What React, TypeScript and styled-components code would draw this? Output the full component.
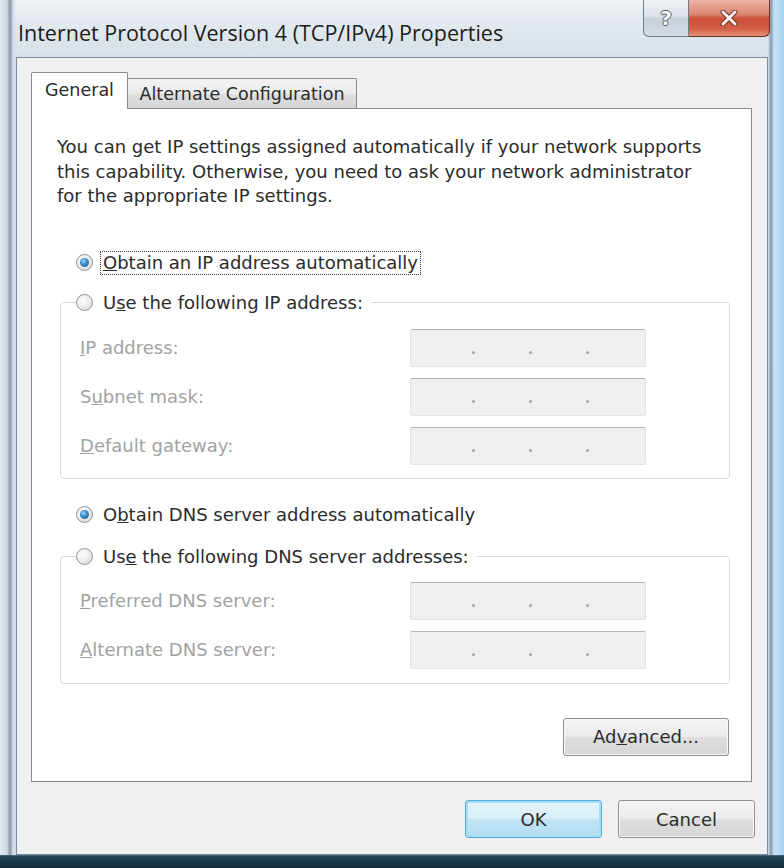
import React from 'react';
import styled, { createGlobalStyle, css } from 'styled-components';

const GlobalStyle = createGlobalStyle`
  html, body {
    margin: 0;
    padding: 0;
  }
  body {
    width: 784px;
    height: 868px;
    overflow: hidden;
    font-family: "DejaVu Sans", "Liberation Sans", sans-serif;
  }
`;

const Window = styled.div`
  width: 784px;
  height: 868px;
  box-sizing: border-box;
  display: flex;
  flex-direction: column;
  padding: 0 16px 13px;
  background:
    linear-gradient(to top, #132c3a 0, #234659 12px, #5f7f93 13px, transparent 13px),
    linear-gradient(to right, #e2e8ee 0, #cdd8e2 7px, #8096a9 10px, #d0dbe5 13px, transparent 16px),
    linear-gradient(to left, #a8d2ee 0, #c6e2f5 10px, #8197aa 13px, transparent 16px),
    linear-gradient(to bottom, #eef2f5 0, #e1e8ee 28px, #d7e0e8 57px, #d3dde6 100%);
`;

const TitleBar = styled.div`
  height: 57px;
  flex: none;
  display: flex;
  align-items: flex-start;
  justify-content: space-between;
  margin-right: -2px;
`;

const Title = styled.div`
  margin: 19px 0 0 2px;
  font-family: "Open Sans", "Noto Sans", sans-serif;
  font-size: 21.5px;
  line-height: 28px;
  color: #1c1c1c;
  white-space: nowrap;
`;

const CaptionGroup = styled.div`
  display: flex;
`;

const CaptionButton = styled.div<{ $close?: boolean }>`
  height: 37px;
  box-sizing: border-box;
  display: flex;
  align-items: center;
  justify-content: center;
  border: 1px solid #6e7b88;
  border-top: none;
  ${(p) =>
    p.$close
      ? css`
          width: 81px;
          border-color: #6a2f28;
          border-left: none;
          border-radius: 0 0 6px 0;
          background: linear-gradient(to bottom, #ecb5a8 0%, #dc8470 40%, #cc5038 52%, #d25f46 80%, #e3917a 100%);
        `
      : css`
          width: 46px;
          border-radius: 0 0 0 6px;
          background: linear-gradient(to bottom, #eef2f5 0%, #dce3e9 45%, #c7d1da 52%, #d4dde5 100%);
        `}
`;

const HelpGlyph = styled.span`
  font-family: "DejaVu Sans", sans-serif;
  font-weight: bold;
  font-size: 20px;
  color: #f7f7f7;
  text-shadow: 1px 0 0 #55626e, -1px 0 0 #55626e, 0 1px 0 #55626e, 0 -1px 0 #55626e;
`;

const Client = styled.div`
  flex: 1;
  display: flex;
  flex-direction: column;
  background: #f0f0f0;
  border: 1px solid #7d8e9e;
  padding: 14px 12px 0 14px;
`;

const TabRow = styled.div`
  height: 36px;
  display: flex;
  align-items: flex-end;
`;

const Tab = styled.div<{ $active?: boolean }>`
  box-sizing: border-box;
  display: flex;
  align-items: center;
  justify-content: center;
  font-size: 17.5px;
  color: #2b2b2b;
  white-space: nowrap;
  border: 1px solid #898c95;
  border-bottom: none;
  ${(p) =>
    p.$active
      ? css`
          height: 37px;
          width: 97px;
          margin-bottom: -1px;
          position: relative;
          z-index: 1;
          background: #fff;
          border-radius: 2px 2px 0 0;
          padding-bottom: 2px;
        `
      : css`
          height: 30px;
          width: 229px;
          border-left: none;
          border-radius: 0 2px 0 0;
          background: linear-gradient(to bottom, #f3f3f3 0%, #ebebeb 50%, #dedede 51%, #d6d6d6 100%);
        `}
`;

const Panel = styled.div`
  width: 721px;
  height: 674px;
  box-sizing: border-box;
  display: flex;
  flex-direction: column;
  background: #fff;
  border: 1px solid #898c95;
  padding: 26px 21px 0 25px;
  font-size: 18px;
  color: #2b2b2b;
`;

const Intro = styled.p`
  margin: 0;
  line-height: 24.5px;
  white-space: nowrap;
`;

const RadioRow = styled.label<{ $gap?: number; $inset?: number }>`
  display: flex;
  align-items: center;
  height: 28px;
  padding-left: ${(p) => p.$inset ?? 19}px;
  gap: 8px;
  margin-top: ${(p) => p.$gap ?? 0}px;
  white-space: nowrap;
`;

const RadioCircle = styled.span<{ $checked?: boolean }>`
  width: 17px;
  height: 17px;
  box-sizing: border-box;
  border-radius: 50%;
  border: 1px solid #8f9396;
  background: radial-gradient(circle at 40% 35%, #ffffff 0%, #eeeeee 45%, #d4d4d4 100%);
  display: flex;
  align-items: center;
  justify-content: center;
  flex: none;
  ${(p) =>
    p.$checked &&
    css`
      &::after {
        content: '';
        width: 9px;
        height: 9px;
        border-radius: 50%;
        background: radial-gradient(circle at 40% 35%, #9fd6f6 0%, #3c8fcc 40%, #1d5588 100%);
      }
    `}
`;

const RadioText = styled.span<{ $focused?: boolean }>`
  line-height: 22px;
  padding: 0 2px;
  ${(p) =>
    p.$focused &&
    css`
      outline: 1px dotted #3a3a3a;
    `}
`;

const GroupBox = styled.fieldset<{ $gap: number }>`
  margin: ${(p) => p.$gap}px 0 0 3px;
  padding: 0;
  border: 1px solid #d5dde3;
  border-radius: 4px;
  min-width: 0;
`;

const GroupLegend = styled.legend`
  margin-left: 15px;
  padding: 0 6px 0 0;
  display: flex;
`;

const GroupBody = styled.div<{ $top: number; $bottom: number }>`
  display: grid;
  grid-template-columns: 330px 236px;
  row-gap: 11px;
  align-items: center;
  padding: ${(p) => p.$top}px 0 ${(p) => p.$bottom}px 19px;
`;

const FieldLabel = styled.span`
  color: #a2a2a2;
  white-space: nowrap;
`;

const IpField = styled.div`
  height: 38px;
  box-sizing: border-box;
  background: #f0f0f0;
  border: 1px solid #e3e3e3;
  border-top-color: #b3b6ba;
  border-radius: 2px;
  display: flex;
  justify-content: center;
  align-items: center;
  gap: 54px;
  padding-top: 10px;
  padding-left: 4px;
`;

const IpDot = styled.span`
  width: 3px;
  height: 3px;
  border-radius: 50%;
  background: #a6a6a6;
`;

const PushButton = styled.button<{ $width: number; $default?: boolean }>`
  width: ${(p) => p.$width}px;
  height: 38px;
  font-family: "DejaVu Sans", "Liberation Sans", sans-serif;
  font-size: 18px;
  color: #2b2b2b;
  border-radius: 3px;
  padding: 0;
  cursor: default;
  ${(p) =>
    p.$default
      ? css`
          border: 1px solid #4fb0de;
          box-shadow: inset 0 0 0 2px #a8dcf4;
          background: linear-gradient(to bottom, #e6f5fc 0%, #d8effa 48%, #bfe4f6 52%, #b3dcf1 100%);
        `
      : css`
          border: 1px solid #8e8f8f;
          box-shadow: inset 0 0 0 1px #f8f8f8;
          background: linear-gradient(to bottom, #f4f4f4 0%, #ebebeb 48%, #dedede 52%, #d6d6d6 100%);
        `}
`;

const AdvancedRow = styled.div`
  display: flex;
  justify-content: flex-end;
  margin: 34px 1px 0 0;
`;

const Footer = styled.div`
  display: flex;
  justify-content: flex-end;
  gap: 16px;
  margin-top: 18px;
`;

const Radio = ({
  checked,
  focused,
  gap,
  inset,
  children,
}: {
  checked?: boolean;
  focused?: boolean;
  gap?: number;
  inset?: number;
  children: React.ReactNode;
}) => (
  <RadioRow $gap={gap} $inset={inset}>
    <RadioCircle $checked={checked} />
    <RadioText $focused={focused}>{children}</RadioText>
  </RadioRow>
);

const Ip = () => (
  <IpField>
    <IpDot />
    <IpDot />
    <IpDot />
  </IpField>
);

export default function App() {
  return (
    <>
      <GlobalStyle />
      <Window>
        <TitleBar>
          <Title>Internet Protocol Version 4 (TCP/IPv4) Properties</Title>
          <CaptionGroup>
            <CaptionButton>
              <HelpGlyph>?</HelpGlyph>
            </CaptionButton>
            <CaptionButton $close>
              <svg width="20" height="16" viewBox="0 0 20 16">
                <path d="M4 2 L16 14 M16 2 L4 14" stroke="#6a3329" strokeWidth="5" strokeLinecap="round" />
                <path d="M4 2 L16 14 M16 2 L4 14" stroke="#fbeeea" strokeWidth="3" strokeLinecap="round" />
              </svg>
            </CaptionButton>
          </CaptionGroup>
        </TitleBar>
        <Client>
          <TabRow>
            <Tab $active>General</Tab>
            <Tab>Alternate Configuration</Tab>
          </TabRow>
          <Panel>
            <Intro>
              You can get IP settings assigned automatically if your network supports
              <br />
              this capability. Otherwise, you need to ask your network administrator
              <br />
              for the appropriate IP settings.
            </Intro>

            <Radio checked focused gap={40}>
              <u>O</u>btain an IP address automatically
            </Radio>
            <GroupBox $gap={12}>
              <GroupLegend>
                <Radio inset={0}>
                  U<u>s</u>e the following IP address:
                </Radio>
              </GroupLegend>
              <GroupBody $top={12} $bottom={13}>
                <FieldLabel>
                  <u>I</u>P address:
                </FieldLabel>
                <Ip />
                <FieldLabel>
                  S<u>u</u>bnet mask:
                </FieldLabel>
                <Ip />
                <FieldLabel>
                  <u>D</u>efault gateway:
                </FieldLabel>
                <Ip />
              </GroupBody>
            </GroupBox>

            <Radio checked gap={22}>
              O<u>b</u>tain DNS server address automatically
            </Radio>
            <GroupBox $gap={14}>
              <GroupLegend>
                <Radio inset={0}>
                  Us<u>e</u> the following DNS server addresses:
                </Radio>
              </GroupLegend>
              <GroupBody $top={11} $bottom={14}>
                <FieldLabel>
                  <u>P</u>referred DNS server:
                </FieldLabel>
                <Ip />
                <FieldLabel>
                  <u>A</u>lternate DNS server:
                </FieldLabel>
                <Ip />
              </GroupBody>
            </GroupBox>

            <AdvancedRow>
              <PushButton $width={166}>
                Ad<u>v</u>anced...
              </PushButton>
            </AdvancedRow>
          </Panel>
          <Footer>
            <PushButton $width={137} $default>
              OK
            </PushButton>
            <PushButton $width={137}>Cancel</PushButton>
          </Footer>
        </Client>
      </Window>
    </>
  );
}
